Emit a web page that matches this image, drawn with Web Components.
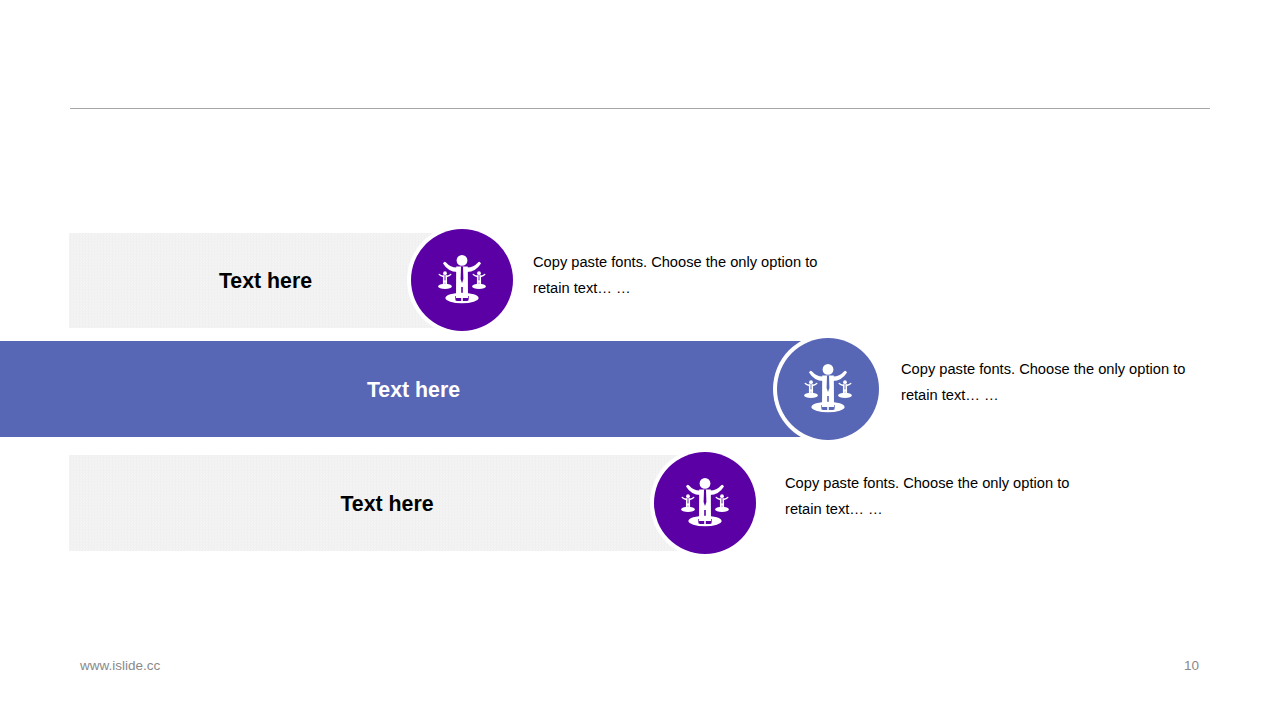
<!DOCTYPE html>
<html>
<head>
<meta charset="utf-8">
<title>Slide</title>
<style>
    html, body {
        margin: 0;
        background: #fff;
        font-family: "Liberation Sans", Arial, sans-serif;
    }
</style>
</head>
<body>
<slide-page>
    <bar-row start="69" bar="393" bar-height="95" top="120" gap="20" text-top="20" label="Text here">Copy paste fonts. Choose the only option to retain text… …</bar-row>
    <bar-row start="0" bar="828" bar-height="96" top="7" gap="22" text-top="18" accent label="Text here">Copy paste fonts. Choose the only option to retain text… …</bar-row>
    <bar-row start="69" bar="636" bar-height="96" top="12" gap="29" text-top="18" label="Text here">Copy paste fonts. Choose the only option to retain text… …</bar-row>
</slide-page>

<script>
class SlidePage extends HTMLElement {
    constructor() {
        super()
        this.attachShadow({mode: 'open'}).innerHTML = `
            <style>
                :host {
                    display: flex;
                    flex-direction: column;
                    width: 1280px;
                    height: 720px;
                    overflow: hidden;
                    box-sizing: border-box;
                    padding-top: 108px;
                }
                .rule {
                    height: 1px;
                    margin: 0 70px;
                    background: #a6a6a6;
                }
                main {
                    flex: 1;
                }
                footer {
                    display: flex;
                    justify-content: space-between;
                    padding: 0 81px 46px 80px;
                    font-size: 13.5px;
                    line-height: 16px;
                    color: #898989;
                }
            </style>
            <div class="rule"></div>
            <main><slot></slot></main>
            <footer><span>www.islide.cc</span><span>10</span></footer>
        `
    }
}

class PersonIcon extends HTMLElement {
    constructor() {
        super()
        this.attachShadow({mode: 'open'}).innerHTML = `
            <style>
                :host {
                    display: block;
                    width: 60px;
                    height: 60px;
                }
                svg {
                    display: block;
                }
            </style>
            <svg width="60" height="60" viewBox="-30 -30 60 60">
                <defs>
                    <g id="figure">
                        <circle cx="0" cy="-19.6" r="5.4" fill="#fff"/>
                        <path d="M-19 -16.5Q-17.6 -19.2 -16 -17.6Q-11 -12 -4 -12.6V-8Q-13.5 -7.6 -19 -16.5ZM19 -16.5Q17.6 -19.2 16 -17.6Q11 -12 4 -12.6V-8Q13.5 -7.6 19 -16.5Z" fill="#fff"/>
                        <path d="M-5.8 -13.5H5.8L6 18H0.8V7H-0.8V18H-6Z" fill="#fff"/>
                        <path d="M-1 -13.5H1L1.4 -1L0 3L-1.4 -1Z" fill="var(--icon-bg)"/>
                    </g>
                </defs>
                <ellipse cx="0" cy="18" rx="16.6" ry="5.2" fill="#fff"/>
                <path d="M-6.7 16V18.4Q-7 21 -5 21H-0.8V18H-6V16ZM6.7 16V18.4Q7 21 5 21H0.8V18H6V16Z" fill="var(--icon-bg)"/>
                <use href="#figure"/>
                <ellipse cx="-17" cy="6.4" rx="6.8" ry="2.6" fill="#fff"/>
                <ellipse cx="17" cy="6.4" rx="6.8" ry="2.6" fill="#fff"/>
                <use href="#figure" transform="translate(-17 0) scale(.35)"/>
                <use href="#figure" transform="translate(17 0) scale(.35)"/>
            </svg>
        `
    }
}

class BarRow extends HTMLElement {
    constructor() {
        super()
        this.attachShadow({mode: 'open'})
    }

    connectedCallback() {
        this.render()
    }

    render() {
        const start = this.getAttribute('start')
        const bar = this.getAttribute('bar')
        const barHeight = this.getAttribute('bar-height')
        const top = this.getAttribute('top')
        const gap = this.getAttribute('gap')
        const textTop = this.getAttribute('text-top')
        const accent = this.hasAttribute('accent')
        const dot = accent ? '#5866b6' : '#5a00a5'

        this.shadowRoot.innerHTML = `
            <style>
                :host {
                    display: flex;
                    align-items: center;
                    height: 102px;
                    margin-top: ${top}px;
                    padding-left: ${start}px;
                }
                .bar {
                    flex: none;
                    box-sizing: border-box;
                    display: flex;
                    align-items: center;
                    justify-content: center;
                    width: ${bar}px;
                    height: ${barHeight}px;
                    padding-top: 2px;
                    padding-right: ${accent ? 1 : 0}px;
                    font-size: 21.33px;
                    font-weight: bold;
                    color: ${accent ? '#fff' : '#000'};
                    background: ${accent ? '#5866b6' : 'repeating-conic-gradient(#f0f0f0 0 25%, #f4f4f4 0 50%) 0 0 / 3px 3px'};
                }
                .dot {
                    flex: none;
                    display: flex;
                    align-items: center;
                    justify-content: center;
                    width: 102px;
                    height: 102px;
                    margin-left: -51px;
                    border-radius: 50%;
                    background: ${dot};
                    box-shadow: 0 0 0 4px #fff;
                    --icon-bg: ${dot};
                }
                .text {
                    align-self: flex-start;
                    width: 300px;
                    margin-left: ${gap}px;
                    padding-top: ${textTop}px;
                    font-size: 14.67px;
                    line-height: 26px;
                    color: #000;
                }
            </style>
            <div class="bar">${this.getAttribute('label')}</div>
            <div class="dot"><person-icon></person-icon></div>
            <div class="text"><slot></slot></div>
        `
    }
}

customElements.define('slide-page', SlidePage)
customElements.define('person-icon', PersonIcon)
customElements.define('bar-row', BarRow)
</script>
</body>
</html>
